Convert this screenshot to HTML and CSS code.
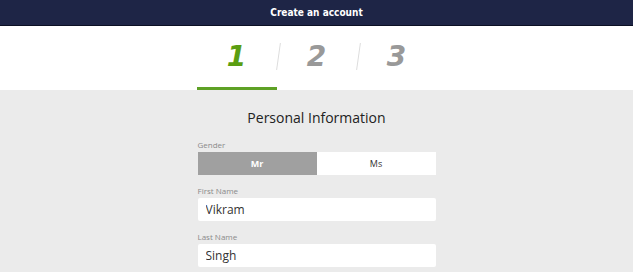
FILE: index.html
```html
<!DOCTYPE html>
<html lang="en">
<head>
    <meta charset="UTF-8">
    <meta name="viewport" content="width=device-width, initial-scale=1.0">
    <title>Create an account</title>
    <link rel="stylesheet" href="styles.css">
</head>
<body>
    <div class="topbar">Create an account</div>

    <div class="steps">
        <div class="step active">1</div>
        <div class="step">2</div>
        <div class="step">3</div>
    </div>

    <div class="content">
        <h2>Personal Information</h2>

        <div class="field">
            <label>Gender</label>
            <div class="toggle">
                <button class="selected">Mr</button>
                <button>Ms</button>
            </div>
        </div>

        <div class="field">
            <label for="firstName">First Name</label>
            <input type="text" id="firstName" value="Vikram">
        </div>

        <div class="field">
            <label for="lastName">Last Name</label>
            <input type="text" id="lastName" value="Singh">
        </div>
    </div>
</body>
</html>
```

FILE: styles.css
```css
body {
    margin: 0;
    font-family: 'Open Sans', 'DejaVu Sans', sans-serif;
    background-color: #ebebeb;
    color: #333;
}

.topbar {
    background-color: #1e2546;
    border-bottom: 1px solid #0c1024;
    color: #ffffff;
    font-family: 'DejaVu Sans Condensed', 'DejaVu Sans', sans-serif;
    font-weight: bold;
    font-size: 10px;
    text-align: center;
    height: 25px;
    line-height: 25px;
}

.steps {
    background-color: #ffffff;
    display: flex;
    justify-content: center;
    height: 64px;
}

.step {
    position: relative;
    width: 80px;
    text-align: center;
    font-family: 'DejaVu Sans', sans-serif;
    font-weight: bold;
    font-style: italic;
    font-size: 28px;
    color: #999999;
    padding-top: 14px;
    box-sizing: border-box;
}

/* slanted separator between steps */
.step + .step::before {
    content: "";
    position: absolute;
    left: 1px;
    top: 17px;
    height: 27px;
    width: 1px;
    background-color: #dddddd;
    transform: skewX(-8deg);
}

.step.active {
    color: #5a9e12;
    border-bottom: 3px solid #5ea125;
}

.content {
    width: 238px;
    margin: 0 auto;
    padding-top: 18px;
}

h2 {
    font-family: 'Open Sans', sans-serif;
    font-weight: normal;
    font-size: 14px;
    line-height: 20px;
    text-align: center;
    color: #222;
    margin: 0 0 12px 0;
}

.field {
    margin-bottom: 11px;
}

label {
    display: block;
    font-size: 8px;
    line-height: 10px;
    color: #8a8a8a;
    margin-bottom: 2px;
}

.toggle {
    display: flex;
    height: 23px;
}

.toggle button {
    flex: 1;
    border: none;
    background-color: #ffffff;
    color: #333;
    font-family: 'Open Sans', sans-serif;
    font-size: 9px;
    padding: 0;
}

.toggle button.selected {
    background-color: #a0a0a0;
    color: #ffffff;
    font-weight: bold;
}

input[type="text"] {
    display: block;
    width: 100%;
    box-sizing: border-box;
    height: 23px;
    border: none;
    border-radius: 2px;
    background-color: #ffffff;
    padding: 0 8px;
    font-family: 'Open Sans', sans-serif;
    font-size: 12px;
    color: #333;
}
```
